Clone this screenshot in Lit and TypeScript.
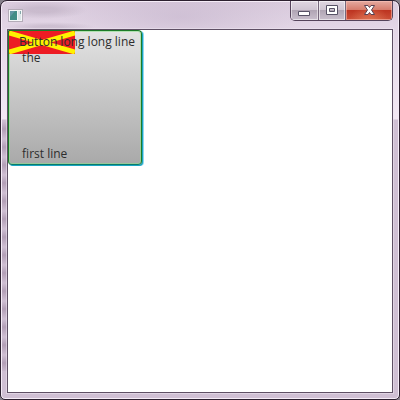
import { LitElement, html, css, svg } from "lit";
import { customElement } from "lit/decorators.js";

const LABEL = "Button long long line\n the\n\n\n\n\n\n first line";

@customElement("caption-buttons")
class CaptionButtons extends LitElement {
  static styles = css`
    :host { display: flex; }
    .group {
      display: flex;
      height: 20px;
      box-sizing: border-box;
      border: 1px solid #54435a;
      border-top: 0;
      border-radius: 0 0 5px 5px;
      overflow: hidden;
    }
    .cap {
      width: 27px;
      margin: 0;
      padding: 0 0 1px;
      border: 0;
      border-right: 1px solid #75677b;
      display: grid;
      place-items: center;
      background: linear-gradient(#e0d7e2 0, #cfc5d2 47%, #b0a5b4 50%, #c9bfcd 100%);
      box-shadow: inset 0 0 0 1px #ffffff88;
    }
    .min { width: 28px; }
    .close {
      width: 46px;
      border-right: 0;
      background:
        radial-gradient(ellipse at 50% 110%, #e98a62aa, #e98a6200 60%),
        linear-gradient(#e5aaa0 0, #d67d6e 45%, #bd3421 50%, #cc5038 100%);
      box-shadow: inset 0 0 0 1px #ffc9bf88;
    }
    svg { display: block; }
  `;
  render() {
    return html`
      <div class="group">
        <button class="cap min" aria-label="Minimize">
          <svg width="13" height="16">${svg`<path d="M.5 9.500h11v4h-11z" fill="#fff" stroke="#575266"/>`}</svg>
        </button>
        <button class="cap" aria-label="Maximize">
          <svg width="13" height="16">${svg`<path d="M.5 3.500h11v9h-11zM3.500 6.500v3h5v-3z" fill="#fff" fill-rule="evenodd" stroke="#575266"/>`}</svg>
        </button>
        <button class="cap close" aria-label="Close">
          <svg width="13" height="16">${svg`<path d="M1.500 3.500h3.500l1.500 2 1.500-2h3.500l-3 4.500 3 4.500h-3.500l-1.500-2-1.500 2h-3.500l3-4.500z" fill="#fff" stroke="#5a4252"/>`}</svg>
        </button>
      </div>
    `;
  }
}

@customElement("app-root")
class AppRoot extends LitElement {
  static styles = css`
    :host { display: block; background: #85808a; }
    .window {
      min-height: 100vh;
      box-sizing: border-box;
      display: flex;
      flex-direction: column;
      padding: 0 6px 6px;
      border: 1px solid #2c202f;
      border-radius: 7px 7px 5px 5px;
      box-shadow: inset 0 0 0 1px #f5ecf7;
      background:
        radial-gradient(ellipse 44px 9px at 42px 9px, #a394a855 30%, #a394a800),
        radial-gradient(ellipse 46px 5px at 48px 26px, #a394a855 30%, #a394a800),
        radial-gradient(ellipse 120px 34px at 180px 16px, #bfaec777, #bfaec700),
        repeating-linear-gradient(#a58fa800 0, #a58fa8aa 8px, #a58fa800 18px) 0 120px / 6px 250px no-repeat,
        linear-gradient(#fff0 118px, #cfbfd3 119px),
        linear-gradient(#d9cbdd 0, #e3d6e6 28px, #f3e8f4 118px);
    }
    .titlebar {
      height: 28px;
      display: flex;
      justify-content: space-between;
      align-items: flex-start;
    }
    .app-icon { display: block; margin: 8px 0 0 1px; }
    .client {
      flex: 1;
      background: #fff;
      border: 1px solid #5e4f64;
      box-shadow: 0 0 0 1px #efe6f188;
    }
    .edge {
      display: block;
      width: 134px;
      height: 135px;
      margin: 0;
      padding: 3px 0 0 10px;
      border: 1px solid #1d7a28;
      border-bottom-color: #087a6c;
      border-radius: 1px 4px 4px 4px;
      box-sizing: border-box;
      background: linear-gradient(#e3e3e3, #a9a9a9);
      box-shadow: inset 0 0 0 1px #8fdf8f99, 1px 1px 0 #18a5c0, 2px 1px 0 #35b5e088;
      position: relative;
      text-align: left;
      font: 12px/16px "Open Sans", "Noto Sans", sans-serif;
      color: #2d2d2d;
    }
    .flag { position: absolute; left: 0; top: 0; }
    .text { display: block; position: relative; height: 100%; white-space: pre; }
  `;
  render() {
    return html`
      <div class="window">
        <div class="titlebar">
          <svg class="app-icon" width="15" height="13" aria-hidden="true">
            <rect x=".5" y=".5" width="14" height="12" fill="#f5f7f8" stroke="#b4acb8" />
            <rect x="2" y="2" width="7" height="9" fill="#438d87" />
            <path d="M2 2h5l-5 6z" fill="#6397a5" />
            <rect x="10" y="2" width="3" height="9" fill="#dce5e8" />
            <rect x="12" y="2" width="1" height="3" fill="#84a8aa" />
          </svg>
          <caption-buttons></caption-buttons>
        </div>
        <main class="client">
          <button class="edge">
            <svg class="flag" width="66" height="23" aria-hidden="true">
              <rect width="66" height="23" fill="#ed1c24" />
              <path d="M0 2L66 21M0 21L66 2" stroke="#fff200" stroke-width="5" />
            </svg>
            <span class="text">${LABEL}</span>
          </button>
        </main>
      </div>
    `;
  }
}
